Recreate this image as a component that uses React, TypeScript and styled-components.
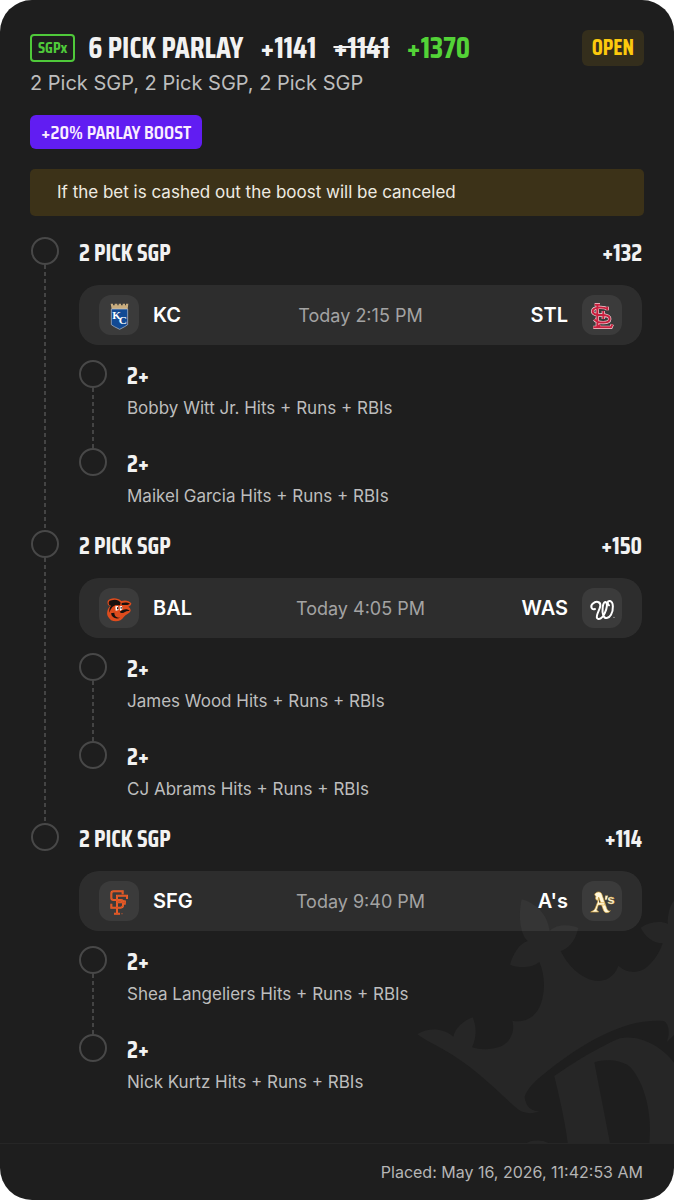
import React from 'react';
import styled, { createGlobalStyle } from 'styled-components';

interface Leg {
  pick: string;
  market: string;
}

interface Team {
  code: string;
  logo: React.ReactNode;
}

interface Group {
  title: string;
  odds: string;
  time: string;
  away: Team;
  home: Team;
  legs: Leg[];
}

interface OddsProps {
  $tone?: 'plain' | 'boosted';
}

const GlobalStyle = createGlobalStyle`
  * {
    box-sizing: border-box;
  }
  body {
    margin: 0;
    background: #ffffff;
    font-family: Inter, "Liberation Sans", sans-serif;
  }
  h1, h2, h3, p, ul {
    margin: 0;
    padding: 0;
    font-weight: 400;
  }
  ul {
    list-style: none;
  }
`;

const display = '"Saira Condensed", "Roboto Condensed", "Liberation Sans Narrow", "Open Sans Condensed", sans-serif';

// Card shell
const Card = styled.article`
  display: flex;
  flex-direction: column;
  min-height: 100vh;
  border-radius: 32px;
  overflow: hidden;
  background: #1e1e1e;
  color: #f2f2f2;
`;

const Body = styled.div`
  position: relative;
  flex: 1;
  padding: 30px 30px 24px;
`;

const Watermark = styled.svg`
  position: absolute;
  right: 0;
  bottom: 0;
  width: 274px;
  height: 263px;
  pointer-events: none;
`;

// Header
const Header = styled.header`
  display: flex;
  align-items: center;
  justify-content: space-between;
  height: 36px;
`;

const Heading = styled.div`
  display: flex;
  align-items: center;
  gap: 17px;
  font-family: ${display};
  font-size: 30px;
  font-weight: 700;
  line-height: 36px;
`;

const SgpTag = styled.span`
  display: flex;
  align-items: center;
  height: 28px;
  padding: 0 6px;
  margin-right: -4px;
  border: 2px solid #4fc93a;
  border-radius: 4px;
  color: #4fc93a;
  font-size: 16px;
  line-height: 24px;
`;

const Title = styled.h1`
  font-size: inherit;
  font-weight: 700;
`;

const Odds = styled.span<OddsProps>`
  color: ${(props) => (props.$tone === 'boosted' ? '#53d337' : '#f2f2f2')};
`;

const OldOdds = styled.s`
  text-decoration-thickness: 2px;
`;

const Status = styled.span`
  padding: 0 10px;
  border-radius: 6px;
  background: #342e1c;
  color: #fcc90d;
  font-family: ${display};
  font-size: 22px;
  font-weight: 700;
  line-height: 36px;
`;

const Summary = styled.p`
  margin-top: 4px;
  color: #bdbdbd;
  font-size: 20px;
  line-height: 26px;
`;

const Boost = styled.p`
  width: fit-content;
  margin-top: 19px;
  padding: 0 11px;
  border-radius: 6px;
  background: #611df2;
  color: #fbeeff;
  font-family: ${display};
  font-size: 20px;
  font-weight: 600;
  line-height: 34px;
`;

const Notice = styled.p`
  margin-top: 20px;
  padding: 0 27px;
  border-radius: 5px;
  background: #3c3218;
  color: #efebe2;
  font-size: 17px;
  line-height: 47px;
`;

// Timeline
const Groups = styled.ul`
  position: relative;
  z-index: 1;
  margin: 21px 2px 0 1px;
`;

const Rail = styled.div`
  display: flex;
  flex-direction: column;
  align-items: center;
  flex: 0 0 28px;
`;

const Dot = styled.span`
  width: 28px;
  height: 28px;
  border: 2px solid #484848;
  border-radius: 50%;
`;

const Dashes = styled.span`
  flex: 1;
  width: 2px;
  background: repeating-linear-gradient(#444444 0 4px, transparent 4px 7px);
`;

const GroupItem = styled.li`
  display: flex;
  gap: 20px;
`;

const GroupContent = styled.div<{ $last: boolean }>`
  flex: 1;
  padding-bottom: ${(props) => (props.$last ? '0' : '18px')};
`;

const GroupHead = styled.div`
  display: flex;
  justify-content: space-between;
  height: 48px;
  font-family: ${display};
  font-size: 24px;
  font-weight: 700;
  line-height: 32px;
`;

const GroupTitle = styled.h2`
  font-size: inherit;
  font-weight: 700;
`;

// Matchup bar
const Matchup = styled.div`
  display: grid;
  grid-template-columns: 1fr auto 1fr;
  align-items: center;
  height: 60px;
  padding: 0 20px;
  border-radius: 20px;
  background: rgba(255, 255, 255, 0.07);
`;

const Side = styled.div<{ $home?: boolean }>`
  display: flex;
  flex-direction: ${(props) => (props.$home ? 'row-reverse' : 'row')};
  align-items: center;
  gap: 14px;
  color: #ffffff;
  font-size: 20px;
  font-weight: 600;
`;

const Time = styled.time`
  color: #a3a3a3;
  font-size: 18px;
`;

const LogoBox = styled.svg`
  width: 40px;
  height: 40px;
  border-radius: 12px;
  background: #3b3b3b;
`;

// Legs
const Legs = styled.ul`
  margin-top: 15px;
`;

const LegItem = styled.li`
  display: flex;
  gap: 20px;
`;

const LegText = styled.div<{ $last: boolean }>`
  padding-bottom: ${(props) => (props.$last ? '0' : '24px')};
  line-height: 32px;
`;

const Pick = styled.h3`
  font-family: ${display};
  font-size: 24px;
  font-weight: 700;
`;

const Market = styled.p`
  color: #bdbdbd;
  font-size: 17px;
`;

const Footer = styled.footer`
  padding: 0 31px;
  border-top: 1px solid #262626;
  color: #b5b5b5;
  font-size: 16px;
  line-height: 56px;
  text-align: right;
`;

// Every logo is drawn on the same 120 unit tile
const Logo = ({ children }: { children: React.ReactNode }) => (
  <LogoBox viewBox="12 12 120 120" aria-hidden="true">{children}</LogoBox>
);

const RoyalsLogo = (
  <Logo>
    <path d="M47 38h7v5h5v-5h8v5h4v-5h7v5h5v-5h7v5h3v-5h7l-2 16H50z" fill="#c9ad7f" />
    <path d="M49 54h49v47l-9 6-15 8-16-8-9-6z" fill="#124a94" stroke="#b9c4d4" strokeWidth="2" />
    <text x="52" y="85" fontFamily="Liberation Serif, serif" fontWeight="700" fontSize="33" fill="#fff">K</text>
    <text x="71" y="98" fontFamily="Liberation Serif, serif" fontWeight="700" fontSize="34" fill="#fff">C</text>
  </Logo>
);

const cardinalShape = 'M50 41h16M58 41v68M46 109h53l4-9M58 109l9-8M88 47v11M88 54c-10-7-40-7-44 5-2 11 12 13 26 13 16 0 26 3 25 13-1 12-34 14-46 0M76 60v24';

const CardinalsLogo = (
  <Logo>
    <path d={cardinalShape} fill="none" stroke="#efd3d8" strokeWidth="10" />
    <path d={cardinalShape} fill="none" stroke="#c8203e" strokeWidth="6" />
  </Logo>
);

const OriolesLogo = (
  <Logo>
    <path d="M38 60c-2-7 1-13 8-15 10-4 25-2 33 6 11-4 24-1 30 7 0 6-5 9-9 10 4 2 7 6 7 13-4 8-15 11-20 17-6 9-14 14-25 14-9 0-17-4-20-10-5-5-7-12-5-20 1-7 5-12 9-16-4-1-7-3-8-6z" fill="#df4c1d" />
    <path d="M41 57c0-6 5-8 9-8 10-4 22-1 27 7l-2 8-13-1-10 6c-4 6-8 10-7 17-4-6-2-14 3-21-4 0-7-3-7-8z" fill="#17110f" />
    <path d="M80 57c9-3 19-2 25 2-7 5-17 4-25 4z" fill="#17110f" />
    <path d="M83 78c8-4 16-3 21 2-7 0-13 2-18 6-6 2-10 0-12-3z" fill="#17110f" />
    <path d="M48 88c2 13 15 19 28 13-13 0-18-6-18-15z" fill="#17110f" />
    <path d="M61 67l8-1 2 12-9 2zM74 67l7-1 1 10-7 4z" fill="#fff" />
    <path d="M66 70h4v6h-4zM77 69h3v5h-3z" fill="#17110f" />
  </Logo>
);

const nationalsShape = 'M51 75C41 79 36 67 44 59C54 50 68 52 67 65C66 78 53 92 57 102C62 110 74 102 80 88C87 74 90 55 82 54C74 55 71 80 76 95C80 106 92 104 99 92C107 78 107 53 96 51C88 50 87 58 93 64';

const NationalsLogo = (
  <Logo>
    <path d={nationalsShape} fill="none" stroke="#fff" strokeWidth="6" strokeLinecap="round" strokeLinejoin="round" />
    <circle cx="108" cy="100" r="2" fill="#bbb" />
  </Logo>
);

const giantsShape = 'M83 52V43H56q-7 0-7 7v13q0 6 7 6h21q7 0 7 6v10q0 7-7 7H49V80M66 110V56h30v10M66 76h27M89 70v13M57 110h18';

const GiantsLogo = (
  <Logo>
    <path d={giantsShape} fill="none" stroke="#f4622a" strokeWidth="6" />
    <path d={giantsShape} fill="none" stroke="#a9411f" strokeWidth="1" />
    <circle cx="81" cy="110" r="2" fill="#b7532e" />
  </Logo>
);

const AthleticsLogo = (
  <Logo>
    <path d="M50 53c2-9 16-11 21-3l15 44c3 8 7 10 11 7-3 7-16 9-20 0L62 60l-3 11c-6-2-8-8-5-12z" fill="#fff8dd" stroke="#d8a83f" strokeWidth="2" />
    <path d="M63 64L52 93c-3 7-7 8-14 12h24l-6-6 5-15h19v-7H63" fill="#fff8dd" stroke="#d8a83f" strokeWidth="2" />
    <path d="M82 56h8l-4 12h-5z" fill="#fff8dd" stroke="#d8a83f" strokeWidth="1" />
    <text x="88" y="82" fontFamily="Liberation Sans, sans-serif" fontWeight="700" fontSize="40" fill="#fff8dd" stroke="#d8a83f" strokeWidth="1">s</text>
  </Logo>
);

const groups: Group[] = [
  {
    title: '2 PICK SGP',
    odds: '+132',
    time: 'Today 2:15 PM',
    away: { code: 'KC', logo: RoyalsLogo },
    home: { code: 'STL', logo: CardinalsLogo },
    legs: [
      { pick: '2+', market: 'Bobby Witt Jr. Hits + Runs + RBIs' },
      { pick: '2+', market: 'Maikel Garcia Hits + Runs + RBIs' },
    ],
  },
  {
    title: '2 PICK SGP',
    odds: '+150',
    time: 'Today 4:05 PM',
    away: { code: 'BAL', logo: OriolesLogo },
    home: { code: 'WAS', logo: NationalsLogo },
    legs: [
      { pick: '2+', market: 'James Wood Hits + Runs + RBIs' },
      { pick: '2+', market: 'CJ Abrams Hits + Runs + RBIs' },
    ],
  },
  {
    title: '2 PICK SGP',
    odds: '+114',
    time: 'Today 9:40 PM',
    away: { code: 'SFG', logo: GiantsLogo },
    home: { code: "A's", logo: AthleticsLogo },
    legs: [
      { pick: '2+', market: 'Shea Langeliers Hits + Runs + RBIs' },
      { pick: '2+', market: 'Nick Kurtz Hits + Runs + RBIs' },
    ],
  },
];

const Crown = () => (
  <Watermark viewBox="0 0 822 789" aria-hidden="true">
    <g fill="#262626">
      <path d="M52 463C80 443 130 442 160 470C165 445 190 422 218 412C232 445 228 475 216 502C250 513 312 510 330 475C340 458 342 440 337 422C370 430 408 415 423 370C436 330 435 285 418 246C390 268 350 262 330 254C340 218 360 190 383 183C358 160 355 100 365 58C410 70 443 105 449 153C468 132 510 132 535 144C525 190 500 208 482 213C500 250 540 300 595 303C630 302 650 275 655 257C680 280 715 282 740 262C765 240 780 215 788 190C760 190 735 170 722 143C750 125 785 122 803 132C803 100 810 75 822 62V465L800 487C812 455 805 428 790 423C700 415 600 460 500 530C430 580 380 620 374 652C378 680 395 695 418 694C400 702 370 703 350 685C300 640 240 580 180 540C130 505 90 490 52 463Z" />
      <path d="M463 588C540 535 620 490 660 475C720 463 785 500 822 548V789H748C757 700 735 610 690 560C660 537 610 537 583 547L630 789H503C495 720 475 640 463 588Z" />
      <path d="M380 789C395 779 428 779 445 789Z" />
    </g>
  </Watermark>
);

const MatchupBar: React.FC<{ group: Group }> = ({ group }) => (
  <Matchup>
    <Side>
      {group.away.logo}
      <span>{group.away.code}</span>
    </Side>
    <Time>{group.time}</Time>
    <Side $home>
      {group.home.logo}
      <span>{group.home.code}</span>
    </Side>
  </Matchup>
);

const App: React.FC = () => {
  return (
    <>
      <GlobalStyle />
      <Card>
        <Body>
          <Crown />
          <Header>
            <Heading>
              <SgpTag>SGPx</SgpTag>
              <Title>6 PICK PARLAY</Title>
              <Odds>+1141</Odds>
              <OldOdds>+1141</OldOdds>
              <Odds $tone="boosted">+1370</Odds>
            </Heading>
            <Status>OPEN</Status>
          </Header>
          <Summary>2 Pick SGP, 2 Pick SGP, 2 Pick SGP</Summary>
          <Boost>+20% PARLAY BOOST</Boost>
          <Notice>If the bet is cashed out the boost will be canceled</Notice>
          <Groups>
            {groups.map((group, index) => (
              <GroupItem key={index}>
                <Rail>
                  <Dot />
                  {index < groups.length - 1 && <Dashes />}
                </Rail>
                <GroupContent $last={index === groups.length - 1}>
                  <GroupHead>
                    <GroupTitle>{group.title}</GroupTitle>
                    <span>{group.odds}</span>
                  </GroupHead>
                  <MatchupBar group={group} />
                  <Legs>
                    {group.legs.map((leg, legIndex) => (
                      <LegItem key={legIndex}>
                        <Rail>
                          <Dot />
                          {legIndex < group.legs.length - 1 && <Dashes />}
                        </Rail>
                        <LegText $last={legIndex === group.legs.length - 1}>
                          <Pick>{leg.pick}</Pick>
                          <Market>{leg.market}</Market>
                        </LegText>
                      </LegItem>
                    ))}
                  </Legs>
                </GroupContent>
              </GroupItem>
            ))}
          </Groups>
        </Body>
        <Footer>Placed: May 16, 2026, 11:42:53 AM</Footer>
      </Card>
    </>
  );
};

export default App;
